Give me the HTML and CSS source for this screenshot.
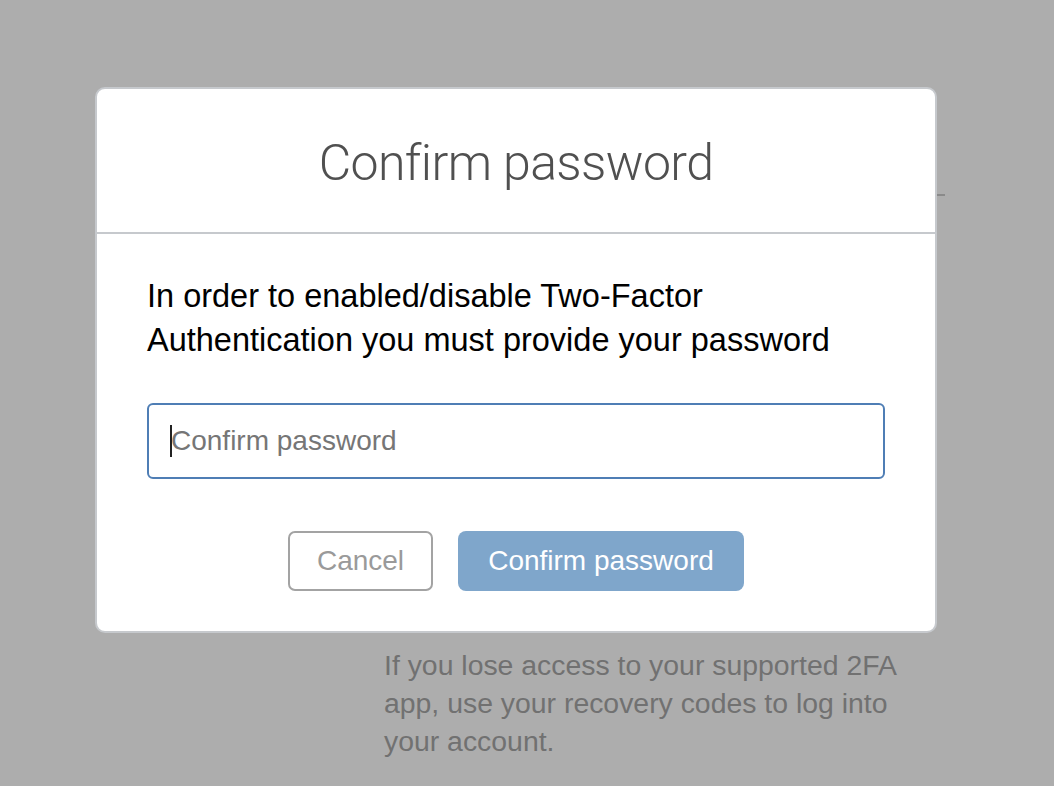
FILE: index.html
```html
<!DOCTYPE html>
<html lang="en">
<head>
<meta charset="utf-8">
<title>Confirm password</title>
<link rel="stylesheet" href="styles.css">
</head>
<body>
<div class="page">
  <div class="rule"></div>
  <p class="hint">If you lose access to your supported 2FA app, use your recovery codes to log into your account.</p>
</div>

<div class="modal">
  <div class="modal-header">
    <h1 class="modal-title">Confirm password</h1>
  </div>
  <div class="modal-body">
    <p class="lead">In order to enabled/disable Two-Factor Authentication you must provide your password</p>
    <div class="field">
      <input class="input" type="password" placeholder="Confirm password">
      <span class="caret"></span>
    </div>
    <div class="actions">
      <button class="btn btn-cancel" type="button">Cancel</button>
      <button class="btn btn-primary" type="button">Confirm password</button>
    </div>
  </div>
</div>
</body>
</html>
```

FILE: styles.css
```css
html, body {
  margin: 0;
  padding: 0;
}

body {
  background: #adadad;
  width: 1054px;
  height: 786px;
  overflow: hidden;
  font-family: "Liberation Sans", Arial, sans-serif;
  position: relative;
}

.page {
  padding: 194px 0 0 384px;
}

.rule {
  width: 561px;
  height: 2px;
  background: #8a8a8a;
}

.hint {
  width: 535px;
  margin: 450px 0 0 0;
  font-size: 28.4px;
  line-height: 38px;
  color: #717171;
}

.modal {
  position: absolute;
  left: 95px;
  top: 87px;
  width: 838px;
  background: #fff;
  border: 2px solid #c6c9cd;
  border-radius: 10px;
}

.modal-header {
  height: 143px;
  border-bottom: 2px solid #c6c9cd;
  display: flex;
  align-items: center;
  justify-content: center;
}

.modal-title {
  margin: 0;
  padding-top: 4px;
  font-family: Roboto, "Liberation Sans", sans-serif;
  font-weight: 300;
  font-size: 50px;
  color: #505050;
  letter-spacing: -0.6px;
}

.modal-body {
  padding: 40px 50px 40px 50px;
}

.lead {
  margin: 0;
  font-size: 32.5px;
  line-height: 44px;
  color: #000;
}

.field {
  position: relative;
  margin-top: 41px;
}

.input {
  display: block;
  box-sizing: border-box;
  width: 738px;
  height: 76px;
  margin: 0;
  padding: 0 22px;
  border: 2px solid #4f7eb5;
  border-radius: 6px;
  font-family: "Liberation Sans", Arial, sans-serif;
  font-size: 28px;
  color: #333;
  outline: none;
  background: #fff;
}

.input::placeholder {
  color: #767676;
}

.caret {
  position: absolute;
  left: 23px;
  top: 22px;
  width: 2px;
  height: 32px;
  background: #222;
}

.actions {
  display: flex;
  justify-content: center;
  gap: 25px;
  margin-top: 52px;
}

.btn {
  box-sizing: border-box;
  height: 60px;
  margin: 0;
  font-family: "Liberation Sans", Arial, sans-serif;
  font-size: 28px;
  border-radius: 8px;
  cursor: pointer;
}

.btn-cancel {
  width: 145px;
  background: #fff;
  color: #9a9a9a;
  border: 2px solid #a3a3a3;
  border-radius: 7px;
}

.btn-primary {
  width: 286px;
  background: #7fa6cb;
  color: #fff;
  border: none;
}
```
